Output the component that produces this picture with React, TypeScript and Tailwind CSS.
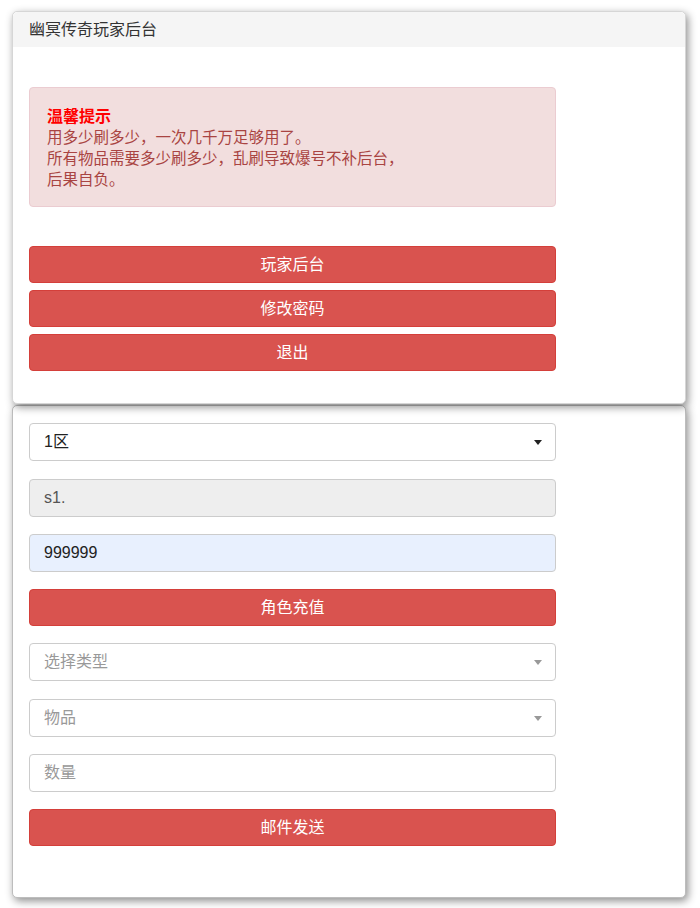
import React from "react";

const font = { fontFamily: '"Liberation Sans", "Noto Sans CJK SC", sans-serif' };

function Btn({ children }: { children: React.ReactNode }) {
  return (
    <div className="w-[527px] h-[37px] flex items-center justify-center rounded-[4px] bg-[#d9534f] border border-[#d43f3a] text-white text-[16px]">
      {children}
    </div>
  );
}

function Caret({ dark }: { dark?: boolean }) {
  return (
    <span
      className={
        "w-0 h-0 border-l-[4px] border-r-[4px] border-t-[5px] border-l-transparent border-r-transparent " +
        (dark ? "border-t-[#222]" : "border-t-[#999]")
      }
    />
  );
}

function Field({
  text,
  variant,
  caret,
}: {
  text: string;
  variant: "normal" | "placeholder" | "disabled" | "autofill";
  caret?: "dark" | "light";
}) {
  const bg =
    variant === "disabled" ? "bg-[#eeeeee]" : variant === "autofill" ? "bg-[#e8f0fe]" : "bg-white";
  const color =
    variant === "placeholder" ? "text-[#999999]" : variant === "disabled" ? "text-[#555555]" : "text-[#222222]";
  return (
    <div
      className={
        "w-[527px] h-[38px] flex items-center justify-between rounded-[4px] border border-[#cccccc] pl-[14px] pr-[13px] text-[16px] " +
        bg +
        " " +
        color
      }
    >
      <span>{text}</span>
      {caret && <Caret dark={caret === "dark"} />}
    </div>
  );
}

export default function App() {
  return (
    <div className="min-h-[908px] bg-white pt-[11px] pl-[12px] pr-[14px] pb-[9px]" style={font}>
      <div className="w-[674px] rounded-[5px] border border-[#d6d6d6] bg-white shadow-[2px_3px_9px_rgba(0,0,0,0.45)] relative z-10">
        <div className="h-[35px] bg-[#f5f5f5] rounded-t-[5px] flex items-center pl-[16px] text-[16px] text-[#333333]">
          幽冥传奇玩家后台
        </div>
        <div className="pl-[16px] pt-[40px] pb-[32px]">
          <div className="w-[527px] h-[120px] rounded-[4px] bg-[#f2dede] border border-[#ebccd1] text-[#a94442] pl-[17px] pt-[18px] text-[15.5px] leading-[21px]">
            <div className="text-[#ff0000] font-bold text-[16px] leading-[21px]">温馨提示</div>
            <div>用多少刷多少，一次几千万足够用了。</div>
            <div>所有物品需要多少刷多少，乱刷导致爆号不补后台，</div>
            <div>后果自负。</div>
          </div>
          <div className="mt-[39px] flex flex-col gap-[7px]">
            <Btn>玩家后台</Btn>
            <Btn>修改密码</Btn>
            <Btn>退出</Btn>
          </div>
        </div>
      </div>
      <div className="mt-[1px] w-[674px] rounded-[5px] border border-[#bdbdbd] bg-white shadow-[2px_3px_9px_rgba(0,0,0,0.45)]">
        <div className="pl-[16px] pt-[17px] pb-[51px] flex flex-col">
          <Field text="1区" variant="normal" caret="dark" />
          <div className="mt-[18px]">
            <Field text="s1." variant="disabled" />
          </div>
          <div className="mt-[17px]">
            <Field text="999999" variant="autofill" />
          </div>
          <div className="mt-[17px]">
            <Btn>角色充值</Btn>
          </div>
          <div className="mt-[17px]">
            <Field text="选择类型" variant="placeholder" caret="light" />
          </div>
          <div className="mt-[18px]">
            <Field text="物品" variant="placeholder" caret="light" />
          </div>
          <div className="mt-[17px]">
            <Field text="数量" variant="placeholder" />
          </div>
          <div className="mt-[17px]">
            <Btn>邮件发送</Btn>
          </div>
        </div>
      </div>
    </div>
  );
}
